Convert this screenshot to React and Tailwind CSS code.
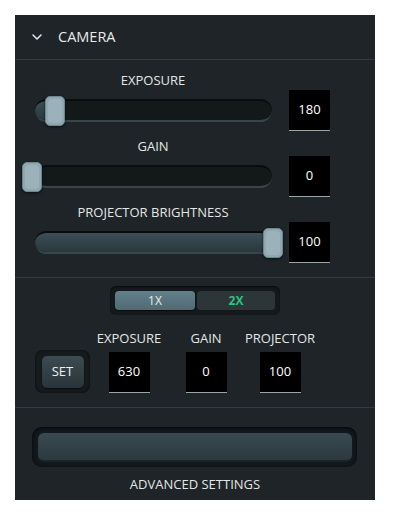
import { ChevronDown } from "lucide-react";

const sliders = [
  { label: "EXPOSURE", value: 180, max: 1900 },
  { label: "GAIN", value: 0, max: 100 },
  { label: "PROJECTOR BRIGHTNESS", value: 100, max: 100 },
];

const ValueBox = ({ value }) => (
  <div className="w-[41px] h-[41px] bg-black border-b border-[#9aa5a8] flex items-center justify-center text-[13px] text-white">
    {value}
  </div>
);

const Slider = ({ label, value, max }) => {
  // thumb travels from x=0 to x=241 inside the 262px area
  const left = Math.round((value / max) * 241);
  return (
    <div className="flex flex-col">
      <div className="w-[262px] text-center text-[13px] leading-4 text-[#e4e6e6]">
        {label}
      </div>
      <div className="flex items-center mt-[2px]">
        <div className="relative w-[262px] h-[41px]">
          <div className="absolute left-[13px] top-[9px] w-[237px] h-[23px] rounded-full bg-[#131819] border-t-2 border-[#0a0d0e] border-b-2 border-b-[#38454a] overflow-hidden">
            <div
              className="h-full rounded-full bg-gradient-to-b from-[#3c4e56] to-[#2a383e]"
              style={{ width: Math.max(left, 0) + "px" }}
            />
          </div>
          <div
            className="absolute top-[6px] w-[20px] h-[30px] rounded-[5px] bg-[#8fa7b0] border border-[#6d868f] shadow-[0_1px_3px_rgba(0,0,0,0.6)]"
            style={{ left: left + "px" }}
          >
            <div className="m-[2px] h-[24px] rounded-[4px] bg-[#9bb2ba]" />
          </div>
        </div>
        <div className="ml-[5px]">
          <ValueBox value={value} />
        </div>
      </div>
    </div>
  );
};

const Preset = ({ label, value, className }) => (
  <div className={"w-[70px] flex flex-col items-center " + className}>
    <div className="text-[13px] leading-4 text-[#e4e6e6] whitespace-nowrap">{label}</div>
    <div className="mt-[6px]">
      <ValueBox value={value} />
    </div>
  </div>
);

export default function App() {
  return (
    <div className="w-[394px] h-[512px] bg-white pt-[15px] pl-[15px] font-['Open_Sans',sans-serif]">
      <div className="w-[360px] h-[485px] bg-[#1e2427] flex flex-col">
        {/* header */}
        <div className="h-[45px] flex items-center border-b border-[#333c40] pl-[14px]">
          <ChevronDown size={16} strokeWidth={2.2} className="text-[#e8eaea]" />
          <span className="ml-[13px] text-[14.5px] text-[#e8eaea]">CAMERA</span>
        </div>

        {/* sliders */}
        <div className="flex flex-col gap-[7px] pl-[7px] pt-[12px] pb-[14px] border-b border-[#333c40]">
          {sliders.map((s) => (
            <Slider key={s.label} {...s} />
          ))}
        </div>

        {/* presets */}
        <div className="flex flex-col pt-[8px] pb-[14px] border-b border-[#333c40]">
          <div className="self-center w-[170px] h-[29px] rounded-md bg-[#141a1c] flex items-center gap-[2px] px-[5px] shadow-[inset_0_1px_2px_rgba(0,0,0,0.7)]">
            <button className="w-[80px] h-[19px] rounded-[4px] bg-gradient-to-b from-[#62808b] to-[#506a74] text-[12px] leading-none text-[#e8eeee] shadow-[0_1px_1px_rgba(0,0,0,0.6)]">
              1X
            </button>
            <button className="w-[78px] h-[19px] rounded-[4px] bg-[#2c3639] text-[12px] leading-none font-bold text-[#2ec27e]">
              2X
            </button>
          </div>
          <div className="flex items-end mt-[15px]">
            <div className="ml-[20px] w-[55px] h-[43px] rounded-lg bg-[#161c1e] flex items-center justify-center shadow-[inset_0_0_3px_rgba(0,0,0,0.8)]">
              <button className="w-[42px] h-[32px] rounded-[5px] bg-gradient-to-b from-[#3d4c52] to-[#28343a] text-[13px] text-[#eef0f0] shadow-[0_1px_2px_rgba(0,0,0,0.7)]">
                SET
              </button>
            </div>
            <Preset label="EXPOSURE" value={630} className="ml-[4px]" />
            <Preset label="GAIN" value={0} className="ml-[7px]" />
            <Preset label="PROJECTOR" value={100} className="ml-[4px]" />
          </div>
        </div>

        {/* advanced */}
        <div className="flex flex-col pt-[19px]">
          <div className="ml-[17px] w-[325px] h-[40px] rounded-[10px] bg-[#11171a] flex items-center justify-center shadow-[inset_0_1px_3px_rgba(0,0,0,0.8)]">
            <div className="w-[314px] h-[29px] rounded-[6px] bg-gradient-to-b from-[#3a4a51] to-[#2c393f] border-b-2 border-[#1a2327]" />
          </div>
          <div className="mt-[8px] text-center text-[13px] text-[#e4e6e6]">ADVANCED SETTINGS</div>
        </div>
      </div>
    </div>
  );
}
